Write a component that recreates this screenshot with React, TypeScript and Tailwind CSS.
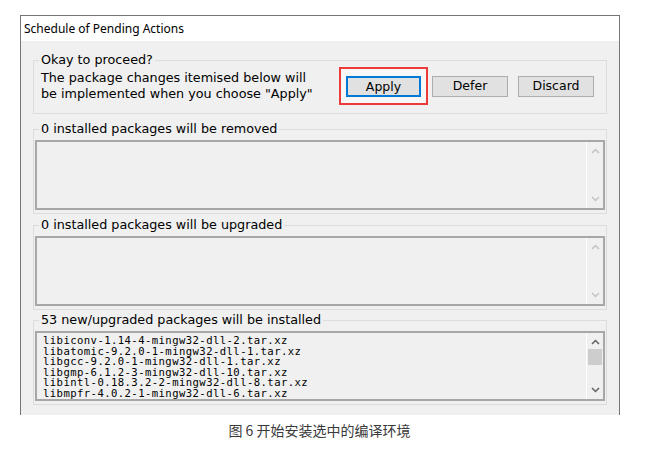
import React from "react";

const ui = { fontFamily: '"DejaVu Sans", Verdana, sans-serif' };
const mono = { fontFamily: '"DejaVu Sans Mono", "Liberation Mono", monospace' };

const pkgs = [
  "libiconv-1.14-4-mingw32-dll-2.tar.xz",
  "libatomic-9.2.0-1-mingw32-dll-1.tar.xz",
  "libgcc-9.2.0-1-mingw32-dll-1.tar.xz",
  "libgmp-6.1.2-3-mingw32-dll-10.tar.xz",
  "libintl-0.18.3.2-2-mingw32-dll-8.tar.xz",
  "libmpfr-4.0.2-1-mingw32-dll-6.tar.xz",
];

function Chevron({ up, on }: { up?: boolean; on?: boolean }) {
  return (
    <svg width="9" height="6" viewBox="0 0 9 6">
      <path d={up ? "M1 5 L4.5 1.5 L8 5" : "M1 1 L4.5 4.5 L8 1"} fill="none" stroke={on ? "#606060" : "#c2c2c2"} strokeWidth="1.5" />
    </svg>
  );
}

function ListBox({ items, thumb }: { items?: string[]; thumb?: boolean }) {
  return (
    <div className="flex h-[70px] border-2 border-[#a7a7a7] bg-[#f0f0f0]">
      <div className="flex-1 overflow-hidden pl-[6px] pt-[2px] text-[10.6px] leading-[10.6px] tracking-[0.42px] text-black" style={mono}>
        {items?.map((p) => <div key={p} className="whitespace-pre">{p}</div>)}
      </div>
      <div className="flex w-[17px] flex-col items-center border-l border-white py-[6px]">
        <Chevron up on={thumb} />
        {thumb && <div className="mt-[4px] h-[16px] w-[14px] bg-[#cdcdcd]" />}
        <div className="flex-1" />
        <Chevron on={thumb} />
      </div>
    </div>
  );
}

function Group({ label, children, className = "" }: { label: string; children: React.ReactNode; className?: string }) {
  return (
    <fieldset className={`border border-[#dcdcdc] px-[1px] ${className}`}>
      <legend className="ml-[4px] px-[2px] text-[12.75px] leading-[14px] text-black">{label}</legend>
      {children}
    </fieldset>
  );
}

function Btn({ children, focus }: { children: React.ReactNode; focus?: boolean }) {
  return (
    <button className={`h-[21px] bg-[#e1e1e1] text-[12.5px] text-black ${focus ? "w-[75px] border-2 border-[#0078d7]" : "w-[76px] border border-[#adadad]"}`}>
      {children}
    </button>
  );
}

export default function App() {
  return (
    <div className="h-[456px] w-[646px] overflow-hidden bg-white" style={ui}>
      <div className="ml-[20px] mt-[15px] flex h-[400px] w-[600px] flex-col border-x border-t border-[#767676]">
        <div className="flex h-[25px] items-center bg-white pl-[3px] text-[12px] text-black" style={{ fontFamily: '"Noto Sans", "Open Sans", sans-serif' }}>
          Schedule of Pending Actions
        </div>
        <div className="flex flex-1 flex-col bg-[#f0f0f0] px-[12px] pt-[12px]">
          <Group label="Okay to proceed?" className="h-[61px]">
            <div className="flex items-center pl-[6px] pr-[11px]">
              <div className="flex-1 text-[12.75px] leading-[16px] text-black">
                The package changes itemised below will
                <br />
                be implemented when you choose "Apply"
              </div>
              <div className="border-2 border-[#ec3b3b] bg-[#f7f7f7] p-[5px]">
                <Btn focus>Apply</Btn>
              </div>
              <div className="ml-[4px] flex gap-[10px]">
                <Btn>Defer</Btn>
                <Btn>Discard</Btn>
              </div>
            </div>
          </Group>
          <Group label="0 installed packages will be removed" className="mt-[8px] pb-[3px]">
            <div className="mt-[4px]"><ListBox /></div>
          </Group>
          <Group label="0 installed packages will be upgraded" className="mt-[4px] pb-[3px]">
            <div className="mt-[4px]"><ListBox /></div>
          </Group>
          <Group label="53 new/upgraded packages will be installed" className="mt-[3px] pb-[3px]">
            <div className="mt-[4px]"><ListBox items={pkgs} thumb /></div>
          </Group>
        </div>
      </div>
      <div className="mt-[6px] pr-[7px] text-center text-[14px] leading-[18px] text-[#3a3a3a]" style={{ fontFamily: '"Noto Sans CJK SC", sans-serif' }}>
        图 6 开始安装选中的编译环境
      </div>
    </div>
  );
}
